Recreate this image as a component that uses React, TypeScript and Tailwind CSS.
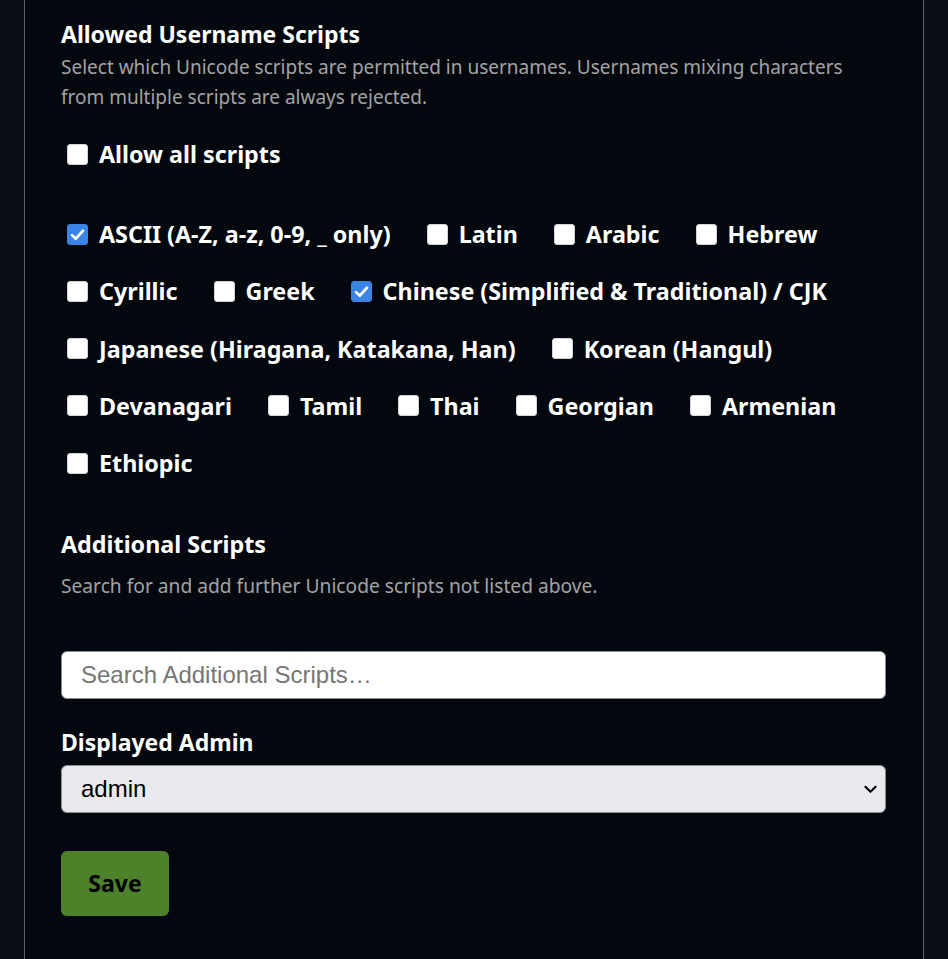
import React from "react";

type Item = { label: string; checked?: boolean };

const scripts: Item[] = [
  { label: "ASCII (A-Z, a-z, 0-9, _ only)", checked: true },
  { label: "Latin" },
  { label: "Arabic" },
  { label: "Hebrew" },
  { label: "Cyrillic" },
  { label: "Greek" },
  { label: "Chinese (Simplified & Traditional) / CJK", checked: true },
  { label: "Japanese (Hiragana, Katakana, Han)" },
  { label: "Korean (Hangul)" },
  { label: "Devanagari" },
  { label: "Tamil" },
  { label: "Thai" },
  { label: "Georgian" },
  { label: "Armenian" },
  { label: "Ethiopic" },
];

function Check({ label, checked }: Item) {
  return (
    <label className="flex h-[30px] items-center gap-[11px] text-[23.3px] leading-[30px] font-bold text-white">
      <span className="relative ml-[6px] inline-flex h-[21px] w-[21px] shrink-0">
        <input
          type="checkbox"
          defaultChecked={checked}
          className="peer m-0 h-[21px] w-[21px] cursor-pointer appearance-none rounded-[3px] border border-[#d4d4d8] bg-white checked:border-[#3a84e6] checked:bg-[#3a84e6]"
        />
        <svg
          viewBox="0 0 20 20"
          className="pointer-events-none absolute inset-0 hidden h-[21px] w-[21px] peer-checked:block"
          fill="none"
          stroke="white"
          strokeWidth="2.6"
          strokeLinecap="round"
          strokeLinejoin="round"
        >
          <polyline points="4.8,10.6 8.4,14 15.2,6.4" />
        </svg>
      </span>
      <span>{label}</span>
    </label>
  );
}

export default function App() {
  return (
    <div className="min-h-screen bg-[#0b0e16] px-[24px] font-['Noto_Sans',sans-serif]">
      <div className="flex min-h-[959px] flex-col border-x border-[#5c6169] bg-[#03070e] pl-[36px] pr-[37px] pt-[19px] pb-[40px]">
        <h2 className="text-[23px] leading-[30px] font-bold text-white">Allowed Username Scripts</h2>
        <p className="mt-[3px] text-[19px] leading-[30px] text-[#a3a3a3]">
          Select which Unicode scripts are permitted in usernames. Usernames mixing characters from multiple scripts
          are always rejected.
        </p>

        <div className="mt-[27px] flex">
          <Check label="Allow all scripts" />
        </div>

        <div className="mt-[50px] flex flex-wrap gap-x-[30px] gap-y-[27.25px]">
          {scripts.map((s) => (
            <Check key={s.label} label={s.label} checked={s.checked} />
          ))}
        </div>

        <h3 className="mt-[51px] text-[23.3px] leading-[30px] font-bold text-white">Additional Scripts</h3>
        <p className="mt-[12px] text-[19.2px] leading-[30px] text-[#a3a3a3]">
          Search for and add further Unicode scripts not listed above.
        </p>

        <input
          type="text"
          placeholder="Search Additional Scripts…"
          className="mt-[50px] h-[48px] w-full rounded-[6px] border border-[#8a8a93] bg-white px-[19px] font-['Liberation_Sans',Arial,sans-serif] text-[24px] text-black outline-none placeholder:text-[#767676]"
        />

        <label className="mt-[28px] text-[23px] leading-[30px] font-bold text-white">Displayed Admin</label>
        <div className="relative mt-[8px]">
          <select
            defaultValue="admin"
            className="h-[48px] w-full appearance-none rounded-[6px] border border-[#8a8a93] bg-[#e9e8ed] px-[19px] font-['Liberation_Sans',Arial,sans-serif] text-[24px] text-black outline-none"
          >
            <option value="admin">admin</option>
          </select>
          <svg
            viewBox="0 0 14 9"
            className="pointer-events-none absolute right-[9px] top-[20px] h-[9px] w-[13px]"
            fill="none"
            stroke="black"
            strokeWidth="2.2"
            strokeLinecap="round"
            strokeLinejoin="round"
          >
            <polyline points="1.5,1.5 7,7 12.5,1.5" />
          </svg>
        </div>

        <div className="mt-[38px] flex">
          <button
            type="button"
            className="h-[65px] w-[108px] rounded-[6px] bg-[#4d822b] text-[23px] font-bold text-black"
          >
            Save
          </button>
        </div>
      </div>
    </div>
  );
}
